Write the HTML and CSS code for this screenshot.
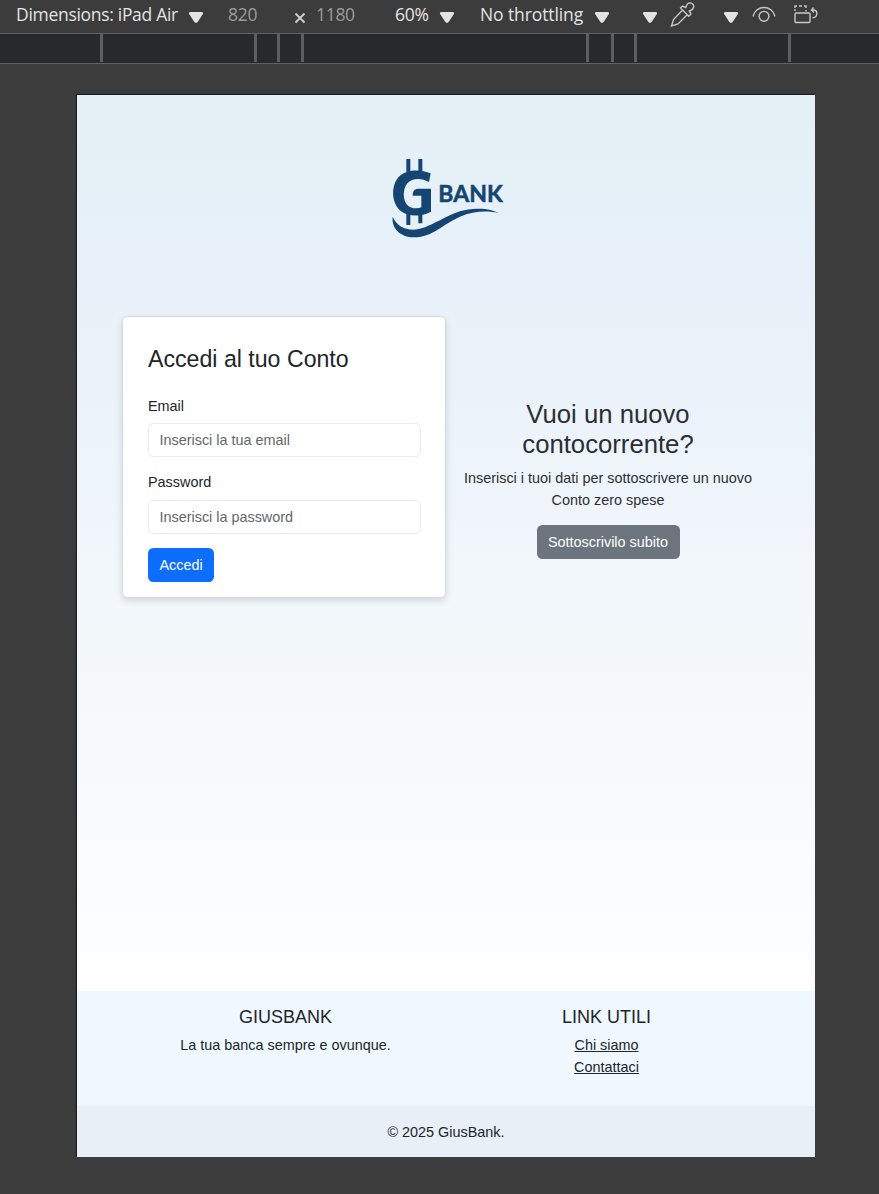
FILE: index.html
```html
<!DOCTYPE html>
<html lang="it">
<head>
<meta charset="utf-8">
<title>GiusBank</title>
<link rel="stylesheet" href="styles.css">
</head>
<body>
<header class="toolbar">
  <span class="tool-text device">Dimensions: iPad Air</span>
  <svg class="arrow after-device" viewBox="0 0 16 13"><path d="M2.500 1h11c1.700 0 2 1.200 1.200 2.300L10 10.500c-1 1.800-3 1.800-4 0L1.300 3.300C.5 2.200.800 1 2.500 1z"/></svg>
  <span class="tool-text dim size-w">820</span>
  <svg class="times" viewBox="0 0 12 12"><path d="M1.500 1.500l9 9M10.500 1.500l-9 9"/></svg>
  <span class="tool-text dim size-h">1180</span>
  <span class="tool-text percent">60%</span>
  <svg class="arrow after-percent" viewBox="0 0 16 13"><path d="M2.500 1h11c1.700 0 2 1.200 1.200 2.300L10 10.500c-1 1.800-3 1.800-4 0L1.300 3.300C.5 2.200.800 1 2.500 1z"/></svg>
  <span class="tool-text throttle">No throttling</span>
  <svg class="arrow after-throttle" viewBox="0 0 16 13"><path d="M2.500 1h11c1.700 0 2 1.200 1.200 2.300L10 10.500c-1 1.800-3 1.800-4 0L1.300 3.300C.5 2.200.800 1 2.500 1z"/></svg>
  <svg class="arrow lone" viewBox="0 0 16 13"><path d="M2.500 1h11c1.700 0 2 1.200 1.200 2.300L10 10.500c-1 1.800-3 1.800-4 0L1.300 3.300C.5 2.200.800 1 2.500 1z"/></svg>
  <svg class="icon picker" viewBox="0 0 26 26"><path d="M12.500 9L3.500 18.500 1.500 25 8 23 17.500 13.500M10.500 7l2-2 3.200 1.500 1-2.300c.8-2 2.800-2.700 4.500-2s3 2.500 2.300 4.300c-.4 1.600-1.600 2.500-3 3l-1.200.5 1.700 3-2.200 2.200z"/></svg>
  <svg class="arrow after-picker" viewBox="0 0 16 13"><path d="M2.500 1h11c1.700 0 2 1.200 1.200 2.300L10 10.500c-1 1.800-3 1.800-4 0L1.300 3.300C.5 2.200.800 1 2.500 1z"/></svg>
  <svg class="icon eye" viewBox="0 0 26 26"><path d="M2 14.500C4.500 2.500 21.500 2.500 24 14.500"/><circle cx="13" cy="14.300" r="4.900"/></svg>
  <svg class="icon rotate" viewBox="0 0 26 26"><rect x="2" y="11" width="15" height="9.500" rx="1"/><path d="M2 9V7M2 6V4h2M6 4h3M11 4h2v2M13 8v1.500M20.500 5.500L18.500 8l2.500 2.500M19 8h2c4 .5 4 7.500-1.500 7.800"/></svg>
</header>
<div class="ruler">
  <i class="seg s1"></i><i class="seg s2"></i><i class="seg s3"></i><i class="seg s4"></i><i class="seg s5"></i><i class="seg s6"></i><i class="seg s3"></i><i class="seg s2"></i>
</div>
<div class="stage">
  <div class="page">
    <main class="main">
      <svg class="logo" viewBox="0 0 420 315" role="img" aria-label="G Bank">
        <path d="M79 42h12v40H79zM115 42h12v40h-12zM79 205h12v35H79zM115 203h12v32h-12z"/>
        <path d="M152 85L147 111C124 98 96 99 82 115C68 132 68 164 81 179C92 191 112 192 124 187V152H98C98 140 102 132 113 131H153V200C122 216 85 216 62 198C33 174 32 120 58 94C80 72 121 72 152 85Z"/>
        <path d="M38 215C50 245 85 262 125 250C180 232 220 192 290 191C320 190 342 196 356 204C320 196 280 198 240 215C190 236 160 276 102 277C60 276 34 250 38 215Z"/>
        <text x="175" y="170" textLength="193" lengthAdjust="spacingAndGlyphs">BANK</text>
      </svg>
      <div class="columns">
        <form class="card">
          <h3 class="card-title">Accedi al tuo Conto</h3>
          <label class="label" for="email">Email</label>
          <input class="field" id="email" type="email" placeholder="Inserisci la tua email">
          <label class="label" for="password">Password</label>
          <input class="field" id="password" type="password" placeholder="Inserisci la password">
          <button class="btn primary" type="button">Accedi</button>
        </form>
        <section class="promo">
          <h2 class="promo-title">Vuoi un nuovo contocorrente?</h2>
          <p class="promo-text">Inserisci i tuoi dati per sottoscrivere un nuovo Conto zero spese</p>
          <button class="btn secondary" type="button">Sottoscrivilo subito</button>
        </section>
      </div>
    </main>
    <footer class="footer">
      <div class="footer-cols">
        <div class="footer-col">
          <h5 class="footer-title">GIUSBANK</h5>
          <p class="footer-text">La tua banca sempre e ovunque.</p>
        </div>
        <div class="footer-col">
          <h5 class="footer-title">LINK UTILI</h5>
          <a class="footer-link" href="#">Chi siamo</a>
          <a class="footer-link" href="#">Contattaci</a>
        </div>
      </div>
      <div class="copyright">© 2025 GiusBank.</div>
    </footer>
  </div>
</div>
</body>
</html>
```

FILE: styles.css
```css
* { box-sizing: border-box; }
body { margin: 0; height: 1194px; overflow: hidden; background: #3c3c3c; font-family: "Liberation Sans", Arial, sans-serif; font-size: 14.4px; line-height: 21.6px; color: #212529; }
h2, h3, h5, p { margin: 0; font-weight: 400; }

.toolbar { display: flex; align-items: center; height: 33px; padding: 0 0 3px 16px; font-family: "Open Sans", "Noto Sans", sans-serif; font-size: 17.5px; color: #e3e3e3; }
.tool-text { flex: none; white-space: nowrap; letter-spacing: -0.3px; }
.dim { color: #9b9b9b; }
.device { width: 172px; }
.size-w { width: 66px; margin-left: 24px; }
.size-h { width: 79px; margin-left: 10px; }
.percent { width: 44px; }
.throttle { width: 114px; margin-left: 25px; letter-spacing: -0.1px; }
.arrow { flex: none; width: 16px; height: 13px; margin-top: 4px; fill: #e3e3e3; }
.lone { margin-left: 32px; }
.times { flex: none; width: 12px; height: 12px; margin-top: 5px; fill: none; stroke: #d0d0d0; stroke-width: 1.8; }
.icon { flex: none; width: 26px; height: 26px; fill: none; stroke: #c7c7c7; stroke-width: 1.4; }
.picker { margin-left: 12px; margin-top: -2px; }
.after-picker { margin-left: 27px; }
.eye { margin-left: 12px; }
.rotate { margin-left: 16px; }

.ruler { display: flex; height: 31px; border-top: 1px solid #606163; border-bottom: 1px solid #606163; background: #28292a; }
.seg { flex: none; height: 28px; border-right: 3px solid #5e5e5e; }
.s1 { width: 103px; }
.s2 { width: 154px; }
.s3 { width: 23px; }
.s4 { width: 24px; }
.s5 { width: 285px; }
.s6 { width: 25px; }

.stage { padding: 31px 64px 37px 77px; }
.page { display: flex; flex-direction: column; width: 738px; height: 1062px; box-shadow: -1px -1px 1px 0 #1e1e1e; }
.main { flex: 1; padding: 50px 45px 0; background: linear-gradient(#e4eff6 0%, #eaf2fa 30%, #f3f8fb 60%, #fefeff 100%); }
.logo { display: block; width: 140px; height: 105px; margin: 0 0 66px 258px; fill: #154673; }
.logo text { font-family: Lato, "Open Sans", sans-serif; font-size: 66px; font-weight: 700; stroke: #154673; stroke-width: 1.5; }
.columns { display: flex; align-items: center; }
.card { width: 324px; height: 282px; padding: 28px 25px 0; border: 1px solid #d5dade; border-radius: 5.4px; background: #fff; box-shadow: 0 3px 7px rgba(0, 0, 0, .13); }
.card-title { margin-bottom: 22px; font-size: 23.15px; line-height: 28px; }
.label { display: block; margin-bottom: 6px; line-height: 22px; }
.field { display: block; width: 273px; height: 34px; margin-bottom: 14px; padding: 0 10.500px; border: 1px solid #e9eaec; border-radius: 5.4px; background: #fff; font: inherit; }
#password { margin-top: 7px; }
.field::placeholder { color: #62676c; opacity: 1; }
.btn { display: block; height: 34px; padding: 1px 11px 0; border: 0; border-radius: 5.4px; color: #fff; font: inherit; }
.primary { width: 66px; background: #0d6efd; }
.secondary { width: 143px; margin: 0 auto; padding-top: 2px; background: #6c757d; }
.promo { width: 324px; padding: 43px 11px 0; text-align: center; color: #2b2f33; }
.promo-title { padding: 0 40px; font-size: 25.7px; line-height: 30px; }
.promo-text { margin: 8px 0 14px; line-height: 22px; }

.footer { flex: none; height: 166px; background: #f0f8ff; }
.footer-cols { display: grid; grid-template-columns: 321px 321px; height: 115px; padding: 15px 48px 0; text-align: center; }
.footer-title { margin-bottom: 6px; font-size: 18px; line-height: 22px; }
.footer-text { line-height: 22px; }
.footer-link { display: block; color: #212529; line-height: 22px; }
.copyright { height: 51px; background: #e8eff7; line-height: 53px; text-align: center; }
```
